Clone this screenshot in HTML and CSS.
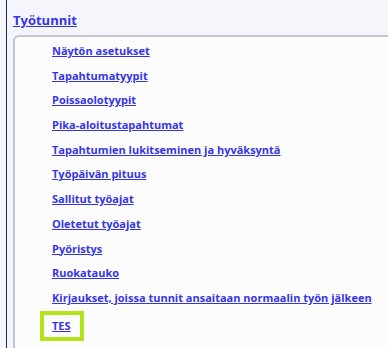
FILE: index.html
```html
<!DOCTYPE html>
<html lang="fi">
<head>
    <meta charset="UTF-8">
    <title>Työtunnit</title>
    <link rel="stylesheet" href="styles.css">
</head>
<body>
<div class="page">
    <a class="section-title" href="#">Työtunnit</a>
    <div class="panel">
        <ul class="links">
            <li><a href="#">Näytön asetukset</a></li>
            <li><a href="#">Tapahtumatyypit</a></li>
            <li><a href="#">Poissaolotyypit</a></li>
            <li><a href="#">Pika-aloitustapahtumat</a></li>
            <li><a href="#">Tapahtumien lukitseminen ja hyväksyntä</a></li>
            <li><a href="#">Työpäivän pituus</a></li>
            <li><a href="#">Sallitut työajat</a></li>
            <li><a href="#">Oletetut työajat</a></li>
            <li><a href="#">Pyöristys</a></li>
            <li><a href="#">Ruokatauko</a></li>
            <li><a href="#">Kirjaukset, joissa tunnit ansaitaan normaalin työn jälkeen</a></li>
            <li class="highlight"><a href="#">TES</a></li>
        </ul>
    </div>
</div>
</body>
</html>
```
FILE: styles.css
```css
body {
    margin: 0;
    background: #f5f6fb;
    font-family: "Open Sans", Arial, sans-serif;
    overflow: hidden;
}
.page {
    margin-left: 6px;
    border-left: 1px solid #1c2c52;
    padding: 8px 0 0 6px;
    height: 348px;
    box-sizing: border-box;
}
.section-title {
    display: inline-block;
    color: #3535e6;
    font-size: 13px;
    font-weight: bold;
    line-height: 18px;
}
.panel {
    margin-top: 5px;
    background: #fcfcfd;
    border: 2px solid #c4c4cc;
    border-right: none;
    border-bottom: none;
    border-top-left-radius: 6px;
    height: 320px;
    padding: 0 0 0 25px;
}
.links {
    list-style: none;
    margin: 0;
    padding: 0;
}
.links li {
    height: 24.7px;
    line-height: 24.7px;
    padding-left: 12px;
}
.links a {
    color: #3535e6;
    font-size: 11px;
    font-weight: bold;
}
.links .highlight {
    padding-left: 0;
}
.links .highlight a {
    display: block;
    width: max-content;
    border: 4px solid #b4e31c;
    padding: 0 9px 0 8px;
    line-height: 22px;
    margin-top: 2px;
}
```
